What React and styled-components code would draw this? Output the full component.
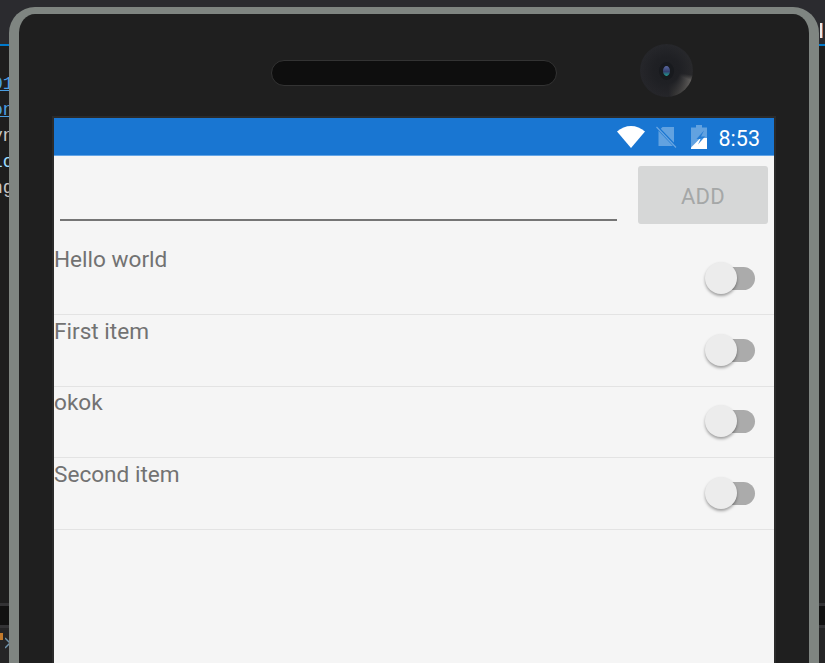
import React from "react";
import styled, { createGlobalStyle } from "styled-components";

const items = ["Hello world", "First item", "okok", "Second item"];

const ideLines = [
  { text: "01", link: true },
  { text: "on", link: true },
  { text: "yn" },
  { text: "lo", accent: true },
  { text: "ng" },
];

function App() {
  return (
    <>
      <GlobalStyle />
      <Desktop>
        <TabBar>
          <TabTick />
        </TabBar>
        <Editor>
          {ideLines.map((line) => (
            <CodeLine key={line.text} $link={line.link} $accent={line.accent}>
              {line.text}
            </CodeLine>
          ))}
        </Editor>
        <Terminal />
        <BottomBar>
          <OrangeMark />
          <Chevron width="6" height="12" viewBox="0 0 6 12">
            <path d="M0 1l5 5-5 5" fill="none" stroke="#6f93ad" strokeWidth="1.5" />
          </Chevron>
        </BottomBar>
      </Desktop>

      <Phone>
        <Bezel>
          <Speaker />
          <Camera>
            <Lens />
          </Camera>
        </Bezel>
        <Screen>
          <StatusBar>
            <svg width="28" height="22" viewBox="0 0 28 22">
              <path d="M0 5.500C4 2 9 0 14 0s10 2 14 5.500L14 22z" fill="#fff" />
            </svg>
            <SimIcon width="21" height="22" viewBox="0 0 21 22">
              <path d="M6.500 1H18v19H2.500V5z" fill="#fff" opacity="0.32" />
              <path d="M1 1l19 20" stroke="#1976d2" strokeWidth="3" />
              <path d="M0.500 1l19.500 20.500" stroke="#fff" strokeWidth="1.200" opacity="0.35" />
            </SimIcon>
            <BatteryIcon width="16" height="24" viewBox="0 0 16 24">
              <path d="M5 0h6v2.500h5V24H0V2.500h5z" fill="#fff" opacity="0.32" />
              <path d="M0 24V22.500L9.500 13H16v11z" fill="#fff" />
              <path d="M13 5.500L5.500 14h4L7 19.500 14 11.500h-4z" fill="#1976d2" opacity="0.85" />
            </BatteryIcon>
            <Clock>8:53</Clock>
          </StatusBar>
          <AddForm>
            <ItemInput type="text" />
            <AddButton type="button" disabled>
              ADD
            </AddButton>
          </AddForm>
          <List>
            {items.map((item) => (
              <Row key={item}>
                <RowLabel>{item}</RowLabel>
                <Switch>
                  <Thumb />
                </Switch>
              </Row>
            ))}
          </List>
        </Screen>
      </Phone>
    </>
  );
}

export default App;

const GlobalStyle = createGlobalStyle`
  html, body {
    margin: 0;
    height: 100%;
    overflow: hidden;
    background: #1e1e1e;
  }
  #root {
    height: 100%;
  }
`;

const Desktop = styled.div`
  display: flex;
  flex-direction: column;
  width: 825px;
  height: 663px;
  overflow: hidden;
`;

const TabBar = styled.div`
  display: flex;
  justify-content: flex-end;
  flex: 0 0 46px;
  box-sizing: border-box;
  padding: 23px 2px 0 0;
  background: #2b2b2f;
  border-bottom: 2px solid #007acc;
`;

const TabTick = styled.div`
  width: 2px;
  height: 15px;
  background: #e8e8e8;
  border-right: 1px solid #b5745a;
`;

const Editor = styled.div`
  flex: 1;
  display: flex;
  flex-direction: column;
  gap: 1px;
  padding-top: 26px;
  background: #1e1e1e;
`;

const CodeLine = styled.div`
  height: 25px;
  line-height: 25px;
  font-family: "Liberation Mono", monospace;
  font-size: 18px;
  text-indent: -8px;
  color: ${(props) => (props.$link ? "#4a9fe3" : props.$accent ? "#9cdcfe" : "#c8c8c8")};
  text-decoration: ${(props) => (props.$link ? "underline" : "none")};
`;

const Terminal = styled.div`
  flex: 0 0 19px;
  background: #111111;
  border-top: 3px solid #333335;
  border-bottom: 3px solid #333335;
`;

const BottomBar = styled.div`
  flex: 0 0 30px;
  display: flex;
  align-items: flex-start;
  gap: 2px;
  padding-top: 5px;
  background: #252526;
`;

const OrangeMark = styled.div`
  width: 3px;
  height: 7px;
  background: #c27a2c;
`;

const Chevron = styled.svg`
  margin-top: 4px;
`;

const Phone = styled.div`
  position: absolute;
  top: 7px;
  left: 9px;
  box-sizing: border-box;
  width: 810px;
  height: 656px;
  padding: 0 33px;
  background: #1f1f1f;
  border: solid #7f8581;
  border-width: 7px 10px 0;
  border-radius: 26px 26px 0 0;
`;

const Bezel = styled.div`
  display: flex;
  align-items: flex-start;
  height: 102px;
  padding-left: 219px;
`;

const Speaker = styled.div`
  width: 284px;
  height: 24px;
  margin-top: 46px;
  background: #0e0e0e;
  border: 1px solid #333333;
  border-radius: 13px;
`;

const Camera = styled.div`
  display: flex;
  align-items: center;
  justify-content: center;
  width: 53px;
  height: 53px;
  margin: 30px 0 0 83px;
  border-radius: 50%;
  background:
    radial-gradient(circle, #1d1e22 0, #1f2024 35%, rgba(31, 32, 36, 0) 75%),
    conic-gradient(
      #27282c 0deg,
      #2a2a2c 100deg,
      #6b6865 112deg,
      #3a3938 160deg,
      #26262a 175deg,
      #27282c 360deg
    );
`;

const Lens = styled.div`
  width: 7px;
  height: 10px;
  border-radius: 50%;
  border: 4px solid #181a1e;
  background: linear-gradient(#5a68a0 0%, #34406f 55%, #1f9d8f 100%);
`;

const Screen = styled.div`
  display: flex;
  flex-direction: column;
  height: 552px;
  background: #f5f5f5;
  border: 2px solid #2a2a2a;
  border-bottom: 0;
`;

const StatusBar = styled.div`
  display: flex;
  align-items: center;
  justify-content: flex-end;
  flex: 0 0 38px;
  box-sizing: border-box;
  padding: 1px 14px 0 0;
  background: #1976d2;
  border-bottom: 1px solid #64a5e6;
`;

const SimIcon = styled.svg`
  margin-left: 11px;
`;

const BatteryIcon = styled.svg`
  margin-left: 14px;
`;

const Clock = styled.span`
  margin: 2px 0 0 12px;
  font-family: Roboto, sans-serif;
  font-size: 21.5px;
  color: #ffffff;
`;

const AddForm = styled.form`
  display: flex;
  align-items: flex-start;
  height: 87.5px;
  padding: 10px 6px 0 6px;
  box-sizing: border-box;
`;

const ItemInput = styled.input`
  flex: 1;
  min-width: 0;
  height: 55px;
  box-sizing: border-box;
  margin: 0;
  padding: 0;
  background: transparent;
  border: 0;
  border-bottom: 2px solid #757575;
  outline: none;
`;

const AddButton = styled.button`
  flex: 0 0 130px;
  height: 58px;
  margin: 0 0 0 21px;
  padding: 3px 0 0;
  border: 0;
  border-radius: 3px;
  background: #d6d7d7;
  font-family: Roboto, sans-serif;
  font-size: 22px;
  letter-spacing: 0.3px;
  color: #a5a7a7;
`;

const List = styled.div`
  display: flex;
  flex-direction: column;
`;

const Row = styled.div`
  display: flex;
  justify-content: space-between;
  box-sizing: border-box;
  height: 71.5px;
  padding-right: 19px;
  border-bottom: 1px solid #e3e3e3;
`;

const RowLabel = styled.span`
  margin-top: 2.500px;
  font-family: Roboto, sans-serif;
  font-size: 22.600px;
  line-height: 28px;
  color: #727272;
`;

const Switch = styled.div`
  position: relative;
  width: 34px;
  height: 23px;
  margin-top: 23.500px;
  background: #ababab;
  border-radius: 0 12px 12px 0;
`;

const Thumb = styled.div`
  position: absolute;
  top: -5px;
  left: -16px;
  width: 32px;
  height: 32px;
  border-radius: 50%;
  background: #ececec;
  box-shadow: 0 2px 3px rgba(0, 0, 0, 0.35);
`;
